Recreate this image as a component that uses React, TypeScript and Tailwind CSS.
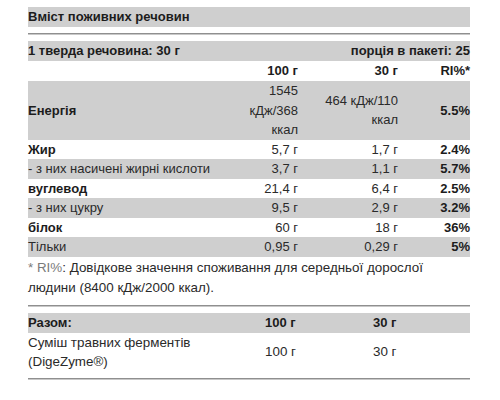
import React from 'react'

type Row = { label: string; bold?: boolean; v100: string; v30: string; ri: string; shade: boolean }

const rows: Row[] = [
  { label: 'Жир', bold: true, v100: '5,7 г', v30: '1,7 г', ri: '2.4%', shade: false },
  { label: '- з них насичені жирні кислоти', v100: '3,7 г', v30: '1,1 г', ri: '5.7%', shade: true },
  { label: 'вуглевод', bold: true, v100: '21,4 г', v30: '6,4 г', ri: '2.5%', shade: false },
  { label: '- з них цукру', v100: '9,5 г', v30: '2,9 г', ri: '3.2%', shade: true },
  { label: 'білок', bold: true, v100: '60 г', v30: '18 г', ri: '36%', shade: false },
  { label: 'Тільки', v100: '0,95 г', v30: '0,29 г', ri: '5%', shade: true },
]

const grid = 'grid grid-cols-[200px_72px_100px_70px]'

function Rule() {
  return <div className="h-[2px] border-t border-t-[#8f8f8f] border-b border-b-[#c8c8c8]" />
}

export default function App() {
  return (
    <div
      className="bg-white w-[500px] h-[400px] pt-[7px] text-[13px] leading-[19.5px] text-[#1c1c1c]"
      style={{ fontFamily: '"Liberation Sans", Arial, sans-serif' }}
    >
      <div className="ml-[28px] w-[442px]">
        <div className="bg-[#cfcfcf] h-[20px] leading-[20px] font-bold">Вміст поживних речовин</div>
        <div className="mt-[6px]">
          <Rule />
        </div>

        <div className="mt-[6px] bg-[#cfcfcf] h-[20px] leading-[20px] font-bold flex justify-between">
          <span>1 тверда речовина: 30 г</span>
          <span>порція в пакеті: 25</span>
        </div>

        <div className={`${grid} h-[20px] leading-[20px] font-bold`}>
          <div />
          <div className="text-right pr-[2px]">100 г</div>
          <div className="text-right pr-[2px]">30 г</div>
          <div className="text-right">RI%*</div>
        </div>

        <div className={`${grid} bg-[#cfcfcf] items-center text-[#2a2a2a]`}>
          <div className="font-bold text-[#1c1c1c]">Енергія</div>
          <div className="text-right pr-[2px]">
            1545
            <br />
            кДж/368
            <br />
            ккал
          </div>
          <div className="text-right pr-[2px]">
            464 кДж/110
            <br />
            ккал
          </div>
          <div className="text-right font-bold text-[#1c1c1c]">5.5%</div>
        </div>

        {rows.map((r) => (
          <div key={r.label} className={`${grid} ${r.shade ? 'bg-[#cfcfcf]' : 'bg-white'} text-[#2a2a2a]`}>
            <div className={r.bold ? 'font-bold text-[#1c1c1c]' : ''}>{r.label}</div>
            <div className="text-right pr-[2px]">{r.v100}</div>
            <div className="text-right pr-[2px]">{r.v30}</div>
            <div className="text-right font-bold text-[#1c1c1c]">{r.ri}</div>
          </div>
        ))}

        <p className="text-[13.4px] leading-[20px] text-[#2a2a2a] mt-[1px]">
          <span className="text-[#7a7a7a]">* RI%</span>: Довідкове значення споживання для середньої дорослої
          <br />
          людини (8400 кДж/2000 ккал).
        </p>

        <div className="mt-[7px]">
          <Rule />
        </div>

        <div className="mt-[6px] grid grid-cols-[237px_108px_97px] bg-[#cfcfcf] h-[20px] leading-[20px] font-bold">
          <div>Разом:</div>
          <div>100 г</div>
          <div>30 г</div>
        </div>
        <div className="grid grid-cols-[237px_108px_97px] items-center text-[13.4px] text-[#2a2a2a]">
          <div>
            Суміш травних ферментів
            <br />
            (DigeZyme®)
          </div>
          <div>100 г</div>
          <div>30 г</div>
        </div>

        <div className="mt-[6px]">
          <Rule />
        </div>
      </div>
    </div>
  )
}
